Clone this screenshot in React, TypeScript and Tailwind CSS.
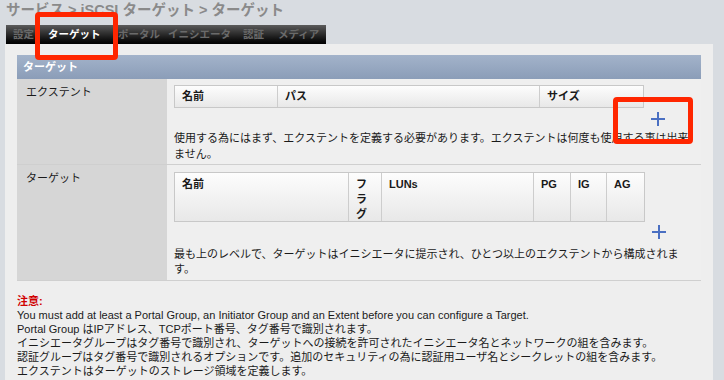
import React from 'react';

const tabs = [
  { label: '設定', w: 'w-[35px]', active: false },
  { label: 'ターゲット', w: 'w-[70px]', active: true },
  { label: 'ポータル', w: 'w-[50px]', active: false },
  { label: 'イニシエータ', w: 'w-[75px]', active: false },
  { label: '認証', w: 'w-[35px]', active: false },
  { label: 'メディア', w: 'w-[45px]', active: false },
];

function Plus() {
  return (
    <svg width="16" height="16" viewBox="0 0 16 16" className="block">
      <path d="M8 1v14M1 8h14" stroke="#4a6fc2" strokeWidth="2" fill="none" />
    </svg>
  );
}

function HeadCell({ w, children, last }: { w: string; children: React.ReactNode; last?: boolean }) {
  return (
    <div className={`${w} shrink-0 pl-[7px] pr-[4px] ${last ? '' : 'border-r border-[#cdcdcd]'}`}>
      {children}
    </div>
  );
}

export default function App() {
  return (
    <div className="relative w-[724px] h-[380px] overflow-hidden bg-[#d8dce1] font-['Liberation_Sans','Noto_Sans_CJK_JP',sans-serif] text-[11px] text-[#1a1a1a]">
      {/* breadcrumb */}
      <div className="pl-[6px] h-[21px] leading-[20px] text-[14.5px] font-bold text-[#8a8a8a]">
        サービス &gt; iSCSI ターゲット &gt; ターゲット
      </div>

      {/* tab bar */}
      <div className="ml-[6px] mt-[4px] w-[320px] h-[19px] bg-gradient-to-b from-[#5c5c5c] via-[#2a2a2a] to-[#020202] flex items-center pl-[7px] text-[10.5px] font-bold leading-none">
        {tabs.map((t) => (
          <span key={t.label} className={`${t.w} shrink-0 ${t.active ? 'text-white' : 'text-[#6a6a6a]'}`}>
            {t.label}
          </span>
        ))}
      </div>

      {/* panel */}
      <div className="ml-[5px] w-[708px] bg-[#eeeeee] pt-[11px] px-[12px] h-[400px]">
        <div className="h-[24px] leading-[24px] pl-[6px] bg-gradient-to-b from-[#a3b3ca] to-[#8b9db8] text-white font-bold">
          ターゲット
        </div>

        {/* extent row */}
        <div className="grid grid-cols-[150px_1fr] border-b border-[#cfcfcf]">
          <div className="bg-[#d6d6d6] pl-[9px] pt-[5px] leading-[16px]">エクステント</div>
          <div className="bg-[#efefef] pl-[7px] pr-[7px] pt-[6px] pb-[2px]">
            <div className="flex w-[470px] h-[23px] items-center border border-[#c8c8c8] bg-gradient-to-b from-[#fdfdfd] to-[#e8e8e8] font-bold">
              <HeadCell w="w-[103px] h-full flex items-center">名前</HeadCell>
              <HeadCell w="w-[262px] h-full flex items-center">パス</HeadCell>
              <HeadCell w="flex-1 h-full flex items-center" last>サイズ</HeadCell>
            </div>
            <div className="h-[22px] flex items-center justify-end pr-[28px]">
              <Plus />
            </div>
            <p className="leading-[16px]">
              使用する為にはまず、エクステントを定義する必要があります。エクステントは何度も使用する事は出来ません。
            </p>
          </div>
        </div>

        {/* target row */}
        <div className="grid grid-cols-[150px_1fr] border-b border-[#cfcfcf]">
          <div className="bg-[#d6d6d6] pl-[9px] pt-[5px] leading-[16px]">ターゲット</div>
          <div className="bg-[#efefef] pl-[7px] pr-[7px] pt-[7px] pb-[3px]">
            <div className="flex w-[471px] h-[50px] border border-[#c8c8c8] bg-gradient-to-b from-[#fdfdfd] to-[#e8e8e8] font-bold leading-[15px]">
              <HeadCell w="w-[174px] pt-[4px]">名前</HeadCell>
              <HeadCell w="w-[33px] pt-[4px]">フラグ</HeadCell>
              <HeadCell w="w-[152px] pt-[4px]">LUNs</HeadCell>
              <HeadCell w="w-[37px] pt-[4px]">PG</HeadCell>
              <HeadCell w="w-[36px] pt-[4px]">IG</HeadCell>
              <HeadCell w="flex-1 pt-[4px]" last>AG</HeadCell>
            </div>
            <div className="h-[25px] flex items-start pt-[2px] justify-end pr-[27px]">
              <Plus />
            </div>
            <p className="leading-[15px]">
              最も上のレベルで、ターゲットはイニシエータに提示され、ひとつ以上のエクステントから構成されます。
            </p>
          </div>
        </div>

        {/* notes */}
        <div className="mt-[13px] leading-[14px]">
          <div className="text-[#d00000] font-bold">注意:</div>
          <div>You must add at least a Portal Group, an Initiator Group and an Extent before you can configure a Target.</div>
          <div>Portal Group はIPアドレス、TCPポート番号、タグ番号で識別されます。</div>
          <div>イニシエータグループはタグ番号で識別され、ターゲットへの接続を許可されたイニシエータ名とネットワークの組を含みます。</div>
          <div>認証グループはタグ番号で識別されるオプションです。追加のセキュリティの為に認証用ユーザ名とシークレットの組を含みます。</div>
          <div>エクステントはターゲットのストレージ領域を定義します。</div>
        </div>
      </div>

      {/* red annotation boxes */}
      <div className="absolute left-[35px] top-[12px] w-[83px] h-[48px] border-[5px] border-[#ff2600] rounded-[4px]" />
      <div className="absolute left-[613px] top-[97px] w-[80px] h-[47px] border-[5px] border-[#ff2600] rounded-[4px]" />
    </div>
  );
}
